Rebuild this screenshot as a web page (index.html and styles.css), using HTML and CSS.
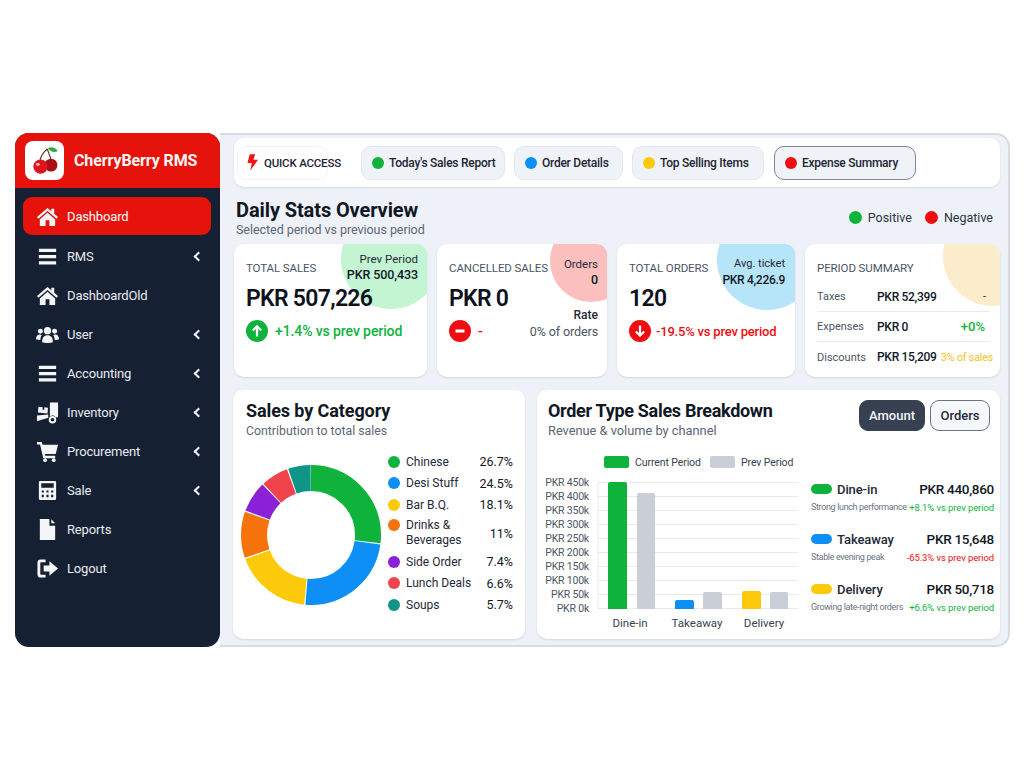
FILE: index.html
```html
<!DOCTYPE html>
<html lang="en">
<head>
<meta charset="utf-8">
<title>CherryBerry RMS</title>
<link rel="stylesheet" href="styles.css">
</head>
<body>
<div class="app">
  <aside class="sidebar">
    <header class="brand">
      <div class="logo">
        <svg viewBox="0 0 40 40" width="30" height="30">
          <path d="M24 3 C29 0 34 2 37 7 C32 9 27 8 24 3Z" fill="#2fa84f"/>
          <path d="M23 4 C18 8 14 13 13 21 M23 4 C25 10 27 13 28 19" fill="none" stroke="#5b3a29" stroke-width="1.6"/>
          <circle cx="28" cy="25.5" r="8.5" fill="#a80f16"/>
          <circle cx="14" cy="27.5" r="9.5" fill="#e0141c"/>
          <ellipse cx="10.5" cy="24.5" rx="2.6" ry="1.8" fill="#fff" opacity=".75"/>
        </svg>
      </div>
      <span class="brand-name">CherryBerry RMS</span>
    </header>
    <nav class="nav">
      <a class="nav-item active"><svg class="nav-icon" viewBox="0 0 24 24"><path d="M12 3 L1 12.6 L2.6 14.4 L12 6.2 L21.4 14.4 L23 12.6 L19 9.1 V4 H16 V6.5Z"/><path d="M12 8 L4 15 V22 H10 V16 H14 V22 H20 V15Z"/></svg><span>Dashboard</span></a>
      <a class="nav-item"><svg class="nav-icon" viewBox="0 0 24 24"><path d="M3 4 H21 V7.4 H3Z M3 10.4 H21 V13.8 H3Z M3 17 H21 V20.4 H3Z"/></svg><span>RMS</span><i class="chev"></i></a>
      <a class="nav-item"><svg class="nav-icon" viewBox="0 0 24 24"><path d="M12 3 L1 12.6 L2.6 14.4 L12 6.2 L21.4 14.4 L23 12.6 L19 9.1 V4 H16 V6.5Z"/><path d="M12 8 L4 15 V22 H10 V16 H14 V22 H20 V15Z"/></svg><span>DashboardOld</span></a>
      <a class="nav-item"><svg class="nav-icon" viewBox="0 0 24 24"><circle cx="12" cy="8" r="3.8"/><circle cx="4.6" cy="8.6" r="2.6"/><circle cx="19.4" cy="8.6" r="2.6"/><path d="M6.4 20 C6.4 15 8.5 12.8 12 12.8 C15.5 12.8 17.6 15 17.6 20 C15 21 9 21 6.4 20Z"/><path d="M0 17 C0 13.5 1.5 12 4 12 C4.8 12 5.5 12.2 6 12.6 C5 14 4.6 15.6 4.6 17.6 C3 17.8 1 17.6 0 17Z"/><path d="M24 17 C24 13.5 22.5 12 20 12 C19.2 12 18.5 12.2 18 12.6 C19 14 19.4 15.6 19.4 17.6 C21 17.8 23 17.6 24 17Z"/></svg><span>User</span><i class="chev"></i></a>
      <a class="nav-item"><svg class="nav-icon" viewBox="0 0 24 24"><path d="M3 4 H21 V7.4 H3Z M3 10.4 H21 V13.8 H3Z M3 17 H21 V20.4 H3Z"/></svg><span>Accounting</span><i class="chev"></i></a>
      <a class="nav-item"><svg class="nav-icon" viewBox="0 0 24 24"><path d="M14.5 1.5 H23 V17 H20.6 C19.8 15.6 18.6 15 17.2 15 C16.2 15 15.3 15.3 14.5 15.9Z"/><path d="M2.5 6 L7 6.4 L6.8 9 L8.6 9.2 L8.8 6.6 L12.5 7 L12 13 L2 12Z"/><path d="M1 15.2 L12.8 14.2 V17.4 L1 21Z"/><circle cx="17.2" cy="19.6" r="2.9" fill="none" stroke="currentColor" stroke-width="2"/></svg><span>Inventory</span><i class="chev"></i></a>
      <a class="nav-item"><svg class="nav-icon" viewBox="0 0 24 24"><path d="M1 2 H6 L6.8 5 H23 L20.6 14.5 H9.2 L9.7 16.4 H20 V19 H7.6 L4.2 4.6 H1Z"/><circle cx="9.5" cy="21" r="2"/><circle cx="18.5" cy="21" r="2"/></svg><span>Procurement</span><i class="chev"></i></a>
      <a class="nav-item"><svg class="nav-icon" viewBox="0 0 24 24"><path fill-rule="evenodd" d="M4.5 2 H19.5 A1.5 1.5 0 0 1 21 3.5 V20.5 A1.5 1.5 0 0 1 19.5 22 H4.5 A1.5 1.5 0 0 1 3 20.5 V3.5 A1.5 1.5 0 0 1 4.5 2Z M5.5 4.5 V9 H18.5 V4.5Z M6 12 V14 H8.2 V12Z M10.9 12 V14 H13.1 V12Z M15.8 12 V14 H18 V12Z M6 16.5 V19 H8.2 V16.5Z M10.9 16.5 V19 H13.1 V16.5Z M15.8 16.5 V19 H18 V16.5Z"/></svg><span>Sale</span><i class="chev"></i></a>
      <a class="nav-item"><svg class="nav-icon" viewBox="0 0 24 24"><path d="M4 1 H14 V8 H20 V23 H4Z"/><path d="M16 1.4 L20 5.6 H16Z"/></svg><span>Reports</span></a>
      <a class="nav-item"><svg class="nav-icon" viewBox="0 0 24 24"><path d="M10 4 H5 A2 2 0 0 0 3 6 V18 A2 2 0 0 0 5 20 H10" fill="none" stroke="currentColor" stroke-width="3"/><path d="M14 4.5 L23 12 L14 19.5 V15.2 H8 V8.8 H14Z"/></svg><span>Logout</span></a>
    </nav>
  </aside>

  <main class="main">
    <section class="quick">
      <div class="chip chip-plain">
        <svg class="bolt" viewBox="0 0 12 18" width="11" height="17"><path d="M3 0 H9 L7 6 H12 L3.5 18 L5.2 9.5 H0.5Z"/></svg>
        <span>QUICK ACCESS</span>
      </div>
      <div class="chip chip-sales"><i class="dot green"></i><span>Today's Sales Report</span></div>
      <div class="chip chip-orders"><i class="dot blue"></i><span>Order Details</span></div>
      <div class="chip chip-top"><i class="dot yellow"></i><span>Top Selling Items</span></div>
      <div class="chip chip-exp"><i class="dot red"></i><span>Expense Summary</span></div>
    </section>

    <section class="overview">
      <div>
        <h1 class="page-title">Daily Stats Overview</h1>
        <p class="page-sub">Selected period vs previous period</p>
      </div>
      <div class="legend">
        <i class="dot dot-lg green"></i><span>Positive</span>
        <i class="dot dot-lg red legend-gap"></i><span>Negative</span>
      </div>
    </section>

    <section class="stats">
      <article class="stat">
        <i class="blob blob-green"></i>
        <div class="stat-head">
          <span class="stat-label">TOTAL SALES</span>
          <div class="corner"><span>Prev Period</span><b>PKR 500,433</b></div>
        </div>
        <div class="stat-value">PKR 507,226</div>
        <div class="delta pos">
          <svg class="delta-icon" viewBox="0 0 22 22"><circle cx="11" cy="11" r="11" fill="#0fb33c"/><path d="M11 16.5 V6.5 M6.8 10.6 L11 6.3 L15.2 10.6" fill="none" stroke="#fff" stroke-width="2.2"/></svg>
          <span>+1.4% vs prev period</span>
        </div>
      </article>

      <article class="stat">
        <i class="blob blob-red"></i>
        <div class="stat-head">
          <span class="stat-label">CANCELLED SALES</span>
          <div class="corner corner-low"><span>Orders</span><b>0</b></div>
        </div>
        <div class="stat-value stat-value-rate">PKR 0<b class="rate">Rate</b></div>
        <div class="delta neg delta-split">
          <svg class="delta-icon" viewBox="0 0 22 22"><circle cx="11" cy="11" r="11" fill="#ee0e12"/><path d="M6.5 11 H15.5" stroke="#fff" stroke-width="3"/></svg>
          <span>-</span>
          <span class="muted-right">0% of orders</span>
        </div>
      </article>

      <article class="stat">
        <i class="blob blob-blue"></i>
        <div class="stat-head">
          <span class="stat-label">TOTAL ORDERS</span>
          <div class="corner corner-low corner-tight"><span>Avg. ticket</span><b>PKR 4,226.9</b></div>
        </div>
        <div class="stat-value">120</div>
        <div class="delta neg delta-tight">
          <svg class="delta-icon" viewBox="0 0 22 22"><circle cx="11" cy="11" r="11" fill="#ee0e12"/><path d="M11 5.5 V15.5 M6.8 11.4 L11 15.7 L15.2 11.4" fill="none" stroke="#fff" stroke-width="2.2"/></svg>
          <span>-19.5% vs prev period</span>
        </div>
      </article>

      <article class="stat stat-summary">
        <i class="blob blob-amber"></i>
        <span class="stat-label">PERIOD SUMMARY</span>
        <div class="sum-row"><span>Taxes</span><b>PKR 52,399</b><em class="sum-dash">-</em></div>
        <div class="sum-row"><span>Expenses</span><b>PKR 0</b><em class="sum-pos">+0%</em></div>
        <div class="sum-row"><span>Discounts</span><b>PKR 15,209</b><em class="sum-amber">3% of sales</em></div>
      </article>
    </section>

    <section class="panels">
      <article class="panel panel-cat">
        <h2 class="panel-title">Sales by Category</h2>
        <p class="panel-sub">Contribution to total sales</p>
        <div class="cat-body">
          <svg class="donut" viewBox="0 0 140 146" width="140" height="146">
            <g fill="none" stroke-width="26" transform="rotate(-90 70 73)">
              <circle cx="70" cy="73" r="57" pathLength="100" stroke="#0fb33c" stroke-dasharray="26.9 73.1" stroke-dashoffset="0"/>
              <circle cx="70" cy="73" r="57" pathLength="100" stroke="#0d8ff5" stroke-dasharray="24.1 75.9" stroke-dashoffset="-27.2"/>
              <circle cx="70" cy="73" r="57" pathLength="100" stroke="#fdca0b" stroke-dasharray="17.8 82.2" stroke-dashoffset="-51.6"/>
              <circle cx="70" cy="73" r="57" pathLength="100" stroke="#f6720b" stroke-dasharray="10.7 89.3" stroke-dashoffset="-69.7"/>
              <circle cx="70" cy="73" r="57" pathLength="100" stroke="#8b21d6" stroke-dasharray="7.1 92.9" stroke-dashoffset="-80.7"/>
              <circle cx="70" cy="73" r="57" pathLength="100" stroke="#f0434c" stroke-dasharray="6.3 93.7" stroke-dashoffset="-88.1"/>
              <circle cx="70" cy="73" r="57" pathLength="100" stroke="#0f9488" stroke-dasharray="5.2 94.8" stroke-dashoffset="-94.7"/>
            </g>
          </svg>
          <ul class="cat-list">
            <li><i class="dot dot-cat green"></i><span class="cat-name">Chinese</span><b>26.7%</b></li>
            <li><i class="dot dot-cat blue"></i><span class="cat-name">Desi Stuff</span><b>24.5%</b></li>
            <li><i class="dot dot-cat yellow"></i><span class="cat-name">Bar B.Q.</span><b>18.1%</b></li>
            <li class="cat-tall"><i class="dot dot-cat orange"></i><span class="cat-name">Drinks &amp;<br>Beverages</span><b>11%</b></li>
            <li><i class="dot dot-cat purple"></i><span class="cat-name">Side Order</span><b>7.4%</b></li>
            <li><i class="dot dot-cat coral"></i><span class="cat-name">Lunch Deals</span><b>6.6%</b></li>
            <li><i class="dot dot-cat teal"></i><span class="cat-name">Soups</span><b>5.7%</b></li>
          </ul>
        </div>
      </article>

      <article class="panel panel-order">
        <div class="order-head">
          <div>
            <h2 class="panel-title">Order Type Sales Breakdown</h2>
            <p class="panel-sub">Revenue &amp; volume by channel</p>
          </div>
          <div class="toggle">
            <button class="btn btn-on">Amount</button>
            <button class="btn">Orders</button>
          </div>
        </div>
        <div class="order-body">
          <svg class="chart" viewBox="0 0 264 180" width="264" height="180">
            <rect x="67" y="3" width="25" height="12" rx="2" fill="#0fb33c"/>
            <text x="98" y="13" class="lg">Current Period</text>
            <rect x="173" y="3" width="25" height="12" rx="2" fill="#c9ced7"/>
            <text x="204" y="13" class="lg">Prev Period</text>
            <g class="grid">
              <path d="M61 29.5H261M61 43.5H261M61 57.5H261M61 71.5H261M61 85.5H261M61 99.5H261M61 113.5H261M61 127.5H261M61 141.5H261M61 155.5H261M61 29V156"/>
            </g>
            <g class="ax">
              <text x="52" y="33">PKR 450k</text><text x="52" y="47">PKR 400k</text><text x="52" y="61">PKR 350k</text><text x="52" y="75">PKR 300k</text><text x="52" y="89">PKR 250k</text><text x="52" y="103">PKR 200k</text><text x="52" y="117">PKR 150k</text><text x="52" y="131">PKR 100k</text><text x="52" y="145">PKR 50k</text><text x="52" y="159">PKR 0k</text>
            </g>
            <path d="M71 156V31a2 2 0 0 1 2-2h15a2 2 0 0 1 2 2V156Z" fill="#0fb33c"/>
            <path d="M100 156V42a2 2 0 0 1 2-2h14a2 2 0 0 1 2 2V156Z" fill="#c9ced7"/>
            <path d="M138 156V149a2 2 0 0 1 2-2h15a2 2 0 0 1 2 2V156Z" fill="#0d8ff5"/>
            <path d="M166 156V141a2 2 0 0 1 2-2h15a2 2 0 0 1 2 2V156Z" fill="#c9ced7"/>
            <path d="M205 156V140a2 2 0 0 1 2-2h15a2 2 0 0 1 2 2V156Z" fill="#fdca0b"/>
            <path d="M233 156V141a2 2 0 0 1 2-2h14a2 2 0 0 1 2 2V156Z" fill="#c9ced7"/>
            <g class="xl">
              <text x="93" y="174">Dine-in</text><text x="160" y="174">Takeaway</text><text x="227" y="174">Delivery</text>
            </g>
          </svg>
          <div class="channels">
            <div class="channel">
              <div class="ch-top"><i class="pill green"></i><span class="ch-name">Dine-in</span><b class="ch-val">PKR 440,860</b></div>
              <div class="ch-bot"><span>Strong lunch performance</span><em class="up">+8.1% vs prev period</em></div>
            </div>
            <div class="channel">
              <div class="ch-top"><i class="pill blue"></i><span class="ch-name">Takeaway</span><b class="ch-val">PKR 15,648</b></div>
              <div class="ch-bot"><span>Stable evening peak</span><em class="down">-65.3% vs prev period</em></div>
            </div>
            <div class="channel">
              <div class="ch-top"><i class="pill yellow"></i><span class="ch-name">Delivery</span><b class="ch-val">PKR 50,718</b></div>
              <div class="ch-bot"><span>Growing late-night orders</span><em class="up">+6.6% vs prev period</em></div>
            </div>
          </div>
        </div>
      </article>
    </section>
  </main>
</div>
</body>
</html>
```
FILE: styles.css
```css
* { box-sizing: border-box; }
html, body { margin: 0; height: 100%; }
body {
  background: #fff;
  font-family: Roboto, "Liberation Sans", sans-serif;
  color: #111827;
  padding: 133px 14px 121px 15px;
  overflow: hidden;
}
h1, h2, p, ul { margin: 0; padding: 0; }
i, em { font-style: normal; }
.app {
  display: flex;
  width: 995px;
  height: 514px;
}
.sidebar {
  width: 205px;
  flex: none;
  background: #152032;
  border-radius: 14px;
  overflow: hidden;
  position: relative;
  z-index: 1;
}
.brand {
  height: 55px;
  background: #e5130b;
  display: flex;
  align-items: center;
  padding-left: 10px;
  gap: 10px;
}
.logo {
  width: 39px;
  height: 39px;
  background: #fff;
  border-radius: 8px;
  display: flex;
  align-items: center;
  justify-content: center;
}
.brand-name { color: #fdf6f4; font-size: 16px; font-weight: 700; letter-spacing: -.1px; }
.nav { padding: 9px 9px 0 8px; display: flex; flex-direction: column; gap: 0; }
.nav-item {
  display: flex;
  align-items: center;
  height: 39px;
  padding-left: 13px;
  color: #e8ebf0;
  font-size: 13px;
  letter-spacing: -.15px;
  position: relative;
}
.nav-item.active { background: #e5130b; border-radius: 9px; height: 38px; color: #fff; margin-bottom: 2px; }
.nav-icon { width: 23px; height: 23px; fill: #f4f5f7; color: #f4f5f7; flex: none; margin-right: 8px; }
.chev {
  margin-left: auto;
  margin-right: 9px;
  width: 7px;
  height: 7px;
  border-left: 2px solid #f1f3f5;
  border-bottom: 2px solid #f1f3f5;
  transform: rotate(45deg);
}
.main {
  flex: none;
  width: 790px;
  min-width: 0;
  background: #eef2f8;
  border: 2px solid #d6dbe4;
  border-left: 0;
  border-radius: 0 14px 14px 0;
  padding: 3px 8px 6px 14px;
  display: flex;
  flex-direction: column;
}
.quick {
  height: 49px;
  flex: none;
  background: #fff;
  border-radius: 10px;
  box-shadow: 0 1px 2px rgba(120,130,150,.2);
  display: flex;
  align-items: center;
  padding-left: 3px;
}
.chip {
  height: 34px;
  display: flex;
  align-items: center;
  gap: 5px;
  padding: 0 10px;
  border-radius: 10px;
  background: #eff2f7;
  border: 1px solid #e3e7ee;
  font-size: 12px;
  letter-spacing: -.25px;
  font-weight: 500;
  color: #1d2533;
  white-space: nowrap;
}
.chip-plain { background: #fff; width: 91px; padding: 0 0 0 9px; gap: 6px; font-size: 11.5px; letter-spacing: -.2px; border-color: #f0f2f6; }
.bolt { fill: #ee1616; flex: none; }
.chip-sales { width: 144px; margin-left: 33px; }
.chip-orders { width: 109px; margin-left: 9px; }
.chip-top { width: 132px; margin-left: 9px; }
.chip-exp { width: 142px; margin-left: 10px; border-color: #7f8794; }
.dot { width: 12px; height: 12px; border-radius: 50%; flex: none; display: block; }
.green { background: #0fb33c; }
.blue { background: #0d8ff5; }
.yellow { background: #fdca0b; }
.red { background: #ee0e12; }
.orange { background: #f6720b; }
.purple { background: #8b21d6; }
.coral { background: #f0434c; }
.teal { background: #0f9488; }
.overview {
  display: flex;
  justify-content: space-between;
  align-items: center;
  padding: 3px 7px 0 2px;
  height: 57px;
  flex: none;
}
.page-title { font-size: 20px; font-weight: 700; line-height: 24px; color: #101725; letter-spacing: -.1px; }
.page-sub { font-size: 12.5px; line-height: 15px; color: #5b6575; letter-spacing: -.05px; }
.legend { display: flex; align-items: center; font-size: 12.5px; color: #2b3442; }
.dot-lg { width: 13px; height: 13px; margin-right: 6px; }
.legend-gap { margin-left: 13px; }
.stats { display: grid; grid-template-columns: 193px 170px 178px 195px; gap: 10px; height: 133px; flex: none; }
.stat {
  position: relative;
  overflow: hidden;
  background: #fff;
  border-radius: 10px;
  box-shadow: 0 1px 2px rgba(120,130,150,.25);
  padding: 8px 9px 0 12px;
}
.stat > *:not(.blob) { position: relative; }
.blob { position: absolute; border-radius: 50%; display: block; }
.blob-green { background: #c3f5d2; width: 100px; height: 100px; left: 107px; top: -35px; }
.blob-red { background: #fbc0bd; width: 82px; height: 82px; left: 113px; top: -24px; }
.blob-blue { background: #b6e4f8; width: 100px; height: 100px; left: 100px; top: -34px; }
.blob-amber { background: #fbeccb; width: 100px; height: 100px; left: 138px; top: -38px; }
.stat-head { display: flex; justify-content: space-between; align-items: flex-start; height: 32px; }
.stat-label { font-size: 11.5px; letter-spacing: -.1px; color: #4b5563; display: block; padding-top: 9px; white-space: nowrap; }
.corner { display: flex; flex-direction: column; align-items: flex-end; font-size: 11.5px; line-height: 15px; color: #1f2937; white-space: nowrap; }
.corner b { font-weight: 500; font-size: 12.5px; letter-spacing: -.1px; color: #111827; }
.corner-low { padding-top: 4px; line-height: 16px; }
.corner-tight { font-size: 11px; margin-right: 1px; }
.corner-tight b { font-size: 12px; letter-spacing: -.3px; }
.stat-value { font-size: 23px; font-weight: 600; letter-spacing: -.7px; line-height: 30px; color: #0c1220; }
.stat-value-rate { display: flex; justify-content: space-between; align-items: flex-end; }
.rate { font-size: 12px; font-weight: 500; letter-spacing: 0; line-height: 14px; margin-bottom: -8px; color: #1f2937; }
.delta { display: flex; align-items: center; gap: 7px; margin-top: 6px; height: 22px; font-size: 14px; letter-spacing: -.1px; font-weight: 500; white-space: nowrap; }
.delta-tight { font-size: 13px; letter-spacing: -.2px; gap: 5px; }
.delta-icon { width: 22px; height: 22px; flex: none; }
.pos { color: #0fb33c; }
.neg { color: #ee0e12; }
.muted-right { margin-left: auto; color: #4b5563; font-weight: 400; font-size: 12.5px; }
.stat-summary { padding: 0 9px 0 12px; }
.stat-summary .stat-label { padding-top: 17px; padding-bottom: 7px; }
.sum-row {
  display: grid;
  grid-template-columns: 60px auto 1fr;
  align-items: center;
  height: 30px;
  border-bottom: 1px solid #e8ebf0;
  font-size: 11px;
  color: #4b5563;
  margin-right: 1px;
}
.sum-row:last-child { border-bottom: 0; }
.sum-row b { font-weight: 500; color: #111827; font-size: 12px; letter-spacing: -.3px; }
.sum-row em { text-align: right; }
.sum-dash { color: #333; padding-right: 4px; }
.sum-pos { color: #0fb33c; font-size: 13px; font-weight: 500; padding-right: 5px; }
.sum-amber { color: #f8bd1e; font-size: 10.5px; letter-spacing: -.1px; white-space: nowrap; margin-right: -3px; }
.panels { display: flex; gap: 12px; margin-top: 13px; height: 249px; margin-left: -1px; flex: none; }
.panel {
  background: #fff;
  border-radius: 10px;
  box-shadow: 0 1px 2px rgba(120,130,150,.25);
}
.panel-title { font-size: 18px; font-weight: 700; line-height: 22px; color: #101725; letter-spacing: -.1px; white-space: nowrap; }
.panel-sub { font-size: 12.3px; line-height: 16px; color: #5b6575; margin-top: 1px; white-space: nowrap; }
.panel-cat { width: 292px; flex: none; padding: 10px 12px 0 13px; }
.cat-body { display: flex; margin-left: -5px; margin-top: 6px; }
.donut { flex: none; margin-top: 17px; }
.cat-list { list-style: none; flex: 1; margin-left: 7px; margin-top: 6px; }
.cat-list li { display: flex; align-items: center; height: 21.5px; font-size: 12px; color: #1f2937; }
.cat-list .cat-tall { height: 35.5px; line-height: 15px; }
.dot-cat { margin-right: 6px; align-self: center; }
.cat-tall .dot-cat { align-self: flex-start; margin-top: 3px; }
.cat-name { flex: 1; }
.cat-list b { font-weight: 400; font-size: 12.5px; color: #111827; }
.panel-order { flex: 1; min-width: 0; padding: 10px 10px 0 11px; }
.panel-order .panel-title { letter-spacing: -.3px; }
.panel-order .panel-sub { font-size: 12.8px; }
.order-head { display: flex; justify-content: space-between; align-items: flex-start; }
.toggle { display: flex; gap: 5px; }
.btn {
  height: 31px;
  width: 60px;
  font: 500 13px Roboto, "Liberation Sans", sans-serif;
  background: #f6f7fa;
  border: 1px solid #6b7280;
  border-radius: 9px;
  color: #1f2937;
  padding: 0;
}
.btn-on { width: 66px; background: #374151; border-color: #374151; color: #f3f4f6; }
.order-body { display: flex; margin-top: 15px; margin-left: -11px; }
.chart { flex: none; margin-top: -1px; }
.grid path { stroke: #e7eaef; stroke-width: 1; fill: none; }
.lg { font-size: 10.5px; letter-spacing: -.1px; fill: #374151; }
.ax text { font-size: 10.5px; letter-spacing: -.2px; fill: #4b5563; text-anchor: end; }
.xl text { font-size: 11.5px; fill: #374151; text-anchor: middle; }
.channels { flex: 1; min-width: 0; margin-left: 10px; margin-right: -4px; padding-top: 26px; display: flex; flex-direction: column; gap: 14px; }
.channel { height: 36px; }
.ch-top { display: flex; align-items: center; height: 18px; }
.pill { width: 21px; height: 10px; border-radius: 5px; display: block; margin-right: 5px; }
.ch-name { font-size: 13px; letter-spacing: -.1px; font-weight: 500; color: #1f2937; flex: 1; }
.ch-val { font-size: 13.5px; letter-spacing: -.3px; font-weight: 500; color: #111827; }
.ch-bot { display: flex; justify-content: space-between; font-size: 9px; color: #6b7280; margin-top: 4px; white-space: nowrap; letter-spacing: -.35px; }
.ch-bot em { font-size: 9.5px; letter-spacing: -.1px; }
.up { color: #0fb33c; }
.down { color: #ee0e12; }
```
